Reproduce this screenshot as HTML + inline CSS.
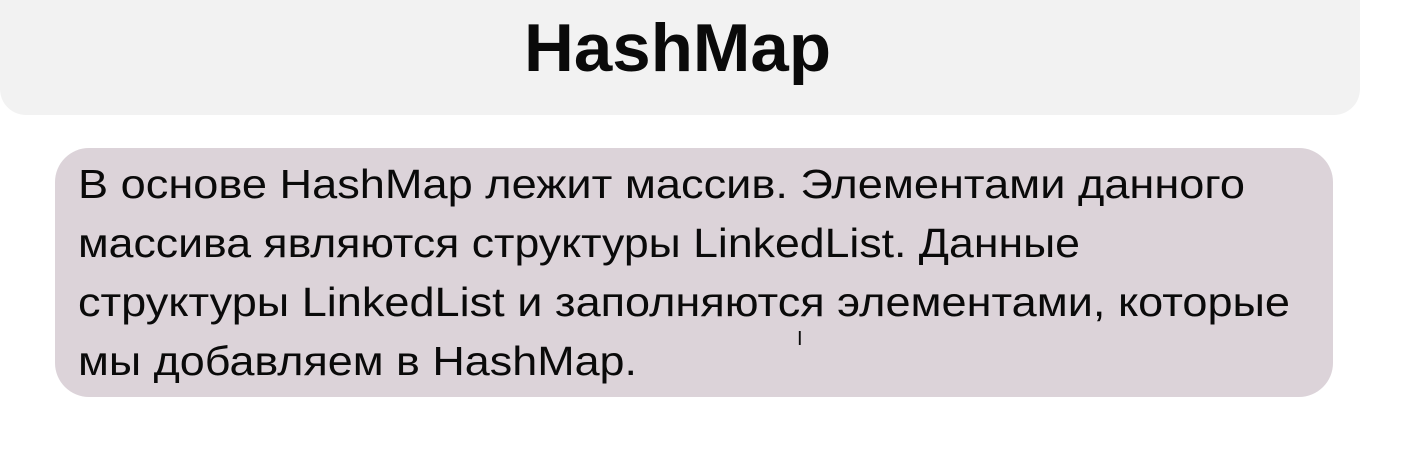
<!DOCTYPE html>
<html><head><meta charset="utf-8"><style>
html,body{margin:0;padding:0;background:#fff;width:1401px;height:464px;overflow:hidden}
.top{position:absolute;left:0;top:-30px;width:1360px;height:145px;background:#f2f2f2;border-radius:26px}
.box{position:absolute;left:55px;top:148px;width:1278px;height:249px;background:#dcd3d9;border-radius:34px}
svg{position:absolute;left:0;top:0}
text{font-family:"Liberation Sans","DejaVu Sans",sans-serif;fill:#0a0a0a}
</style></head><body>
<div class="top"></div>
<div class="box"></div>
<svg width="1401" height="464">
<text x="524" y="71" font-size="68" font-weight="bold" textLength="307" lengthAdjust="spacingAndGlyphs">HashMap</text>
<text x="78" y="198" font-size="41" textLength="1167" lengthAdjust="spacingAndGlyphs">В основе HashMap лежит массив. Элементами данного</text>
<text x="78" y="257" font-size="41" textLength="1002" lengthAdjust="spacingAndGlyphs">массива являются структуры LinkedList. Данные</text>
<text x="78" y="316" font-size="41" textLength="1212" lengthAdjust="spacingAndGlyphs">структуры LinkedList и заполняются элементами, которые</text>
<text x="78" y="375" font-size="41" textLength="559" lengthAdjust="spacingAndGlyphs">мы добавляем в HashMap.</text>
<text x="797" y="345" font-size="20" fill="#333">I</text>
</svg>
</body></html>
